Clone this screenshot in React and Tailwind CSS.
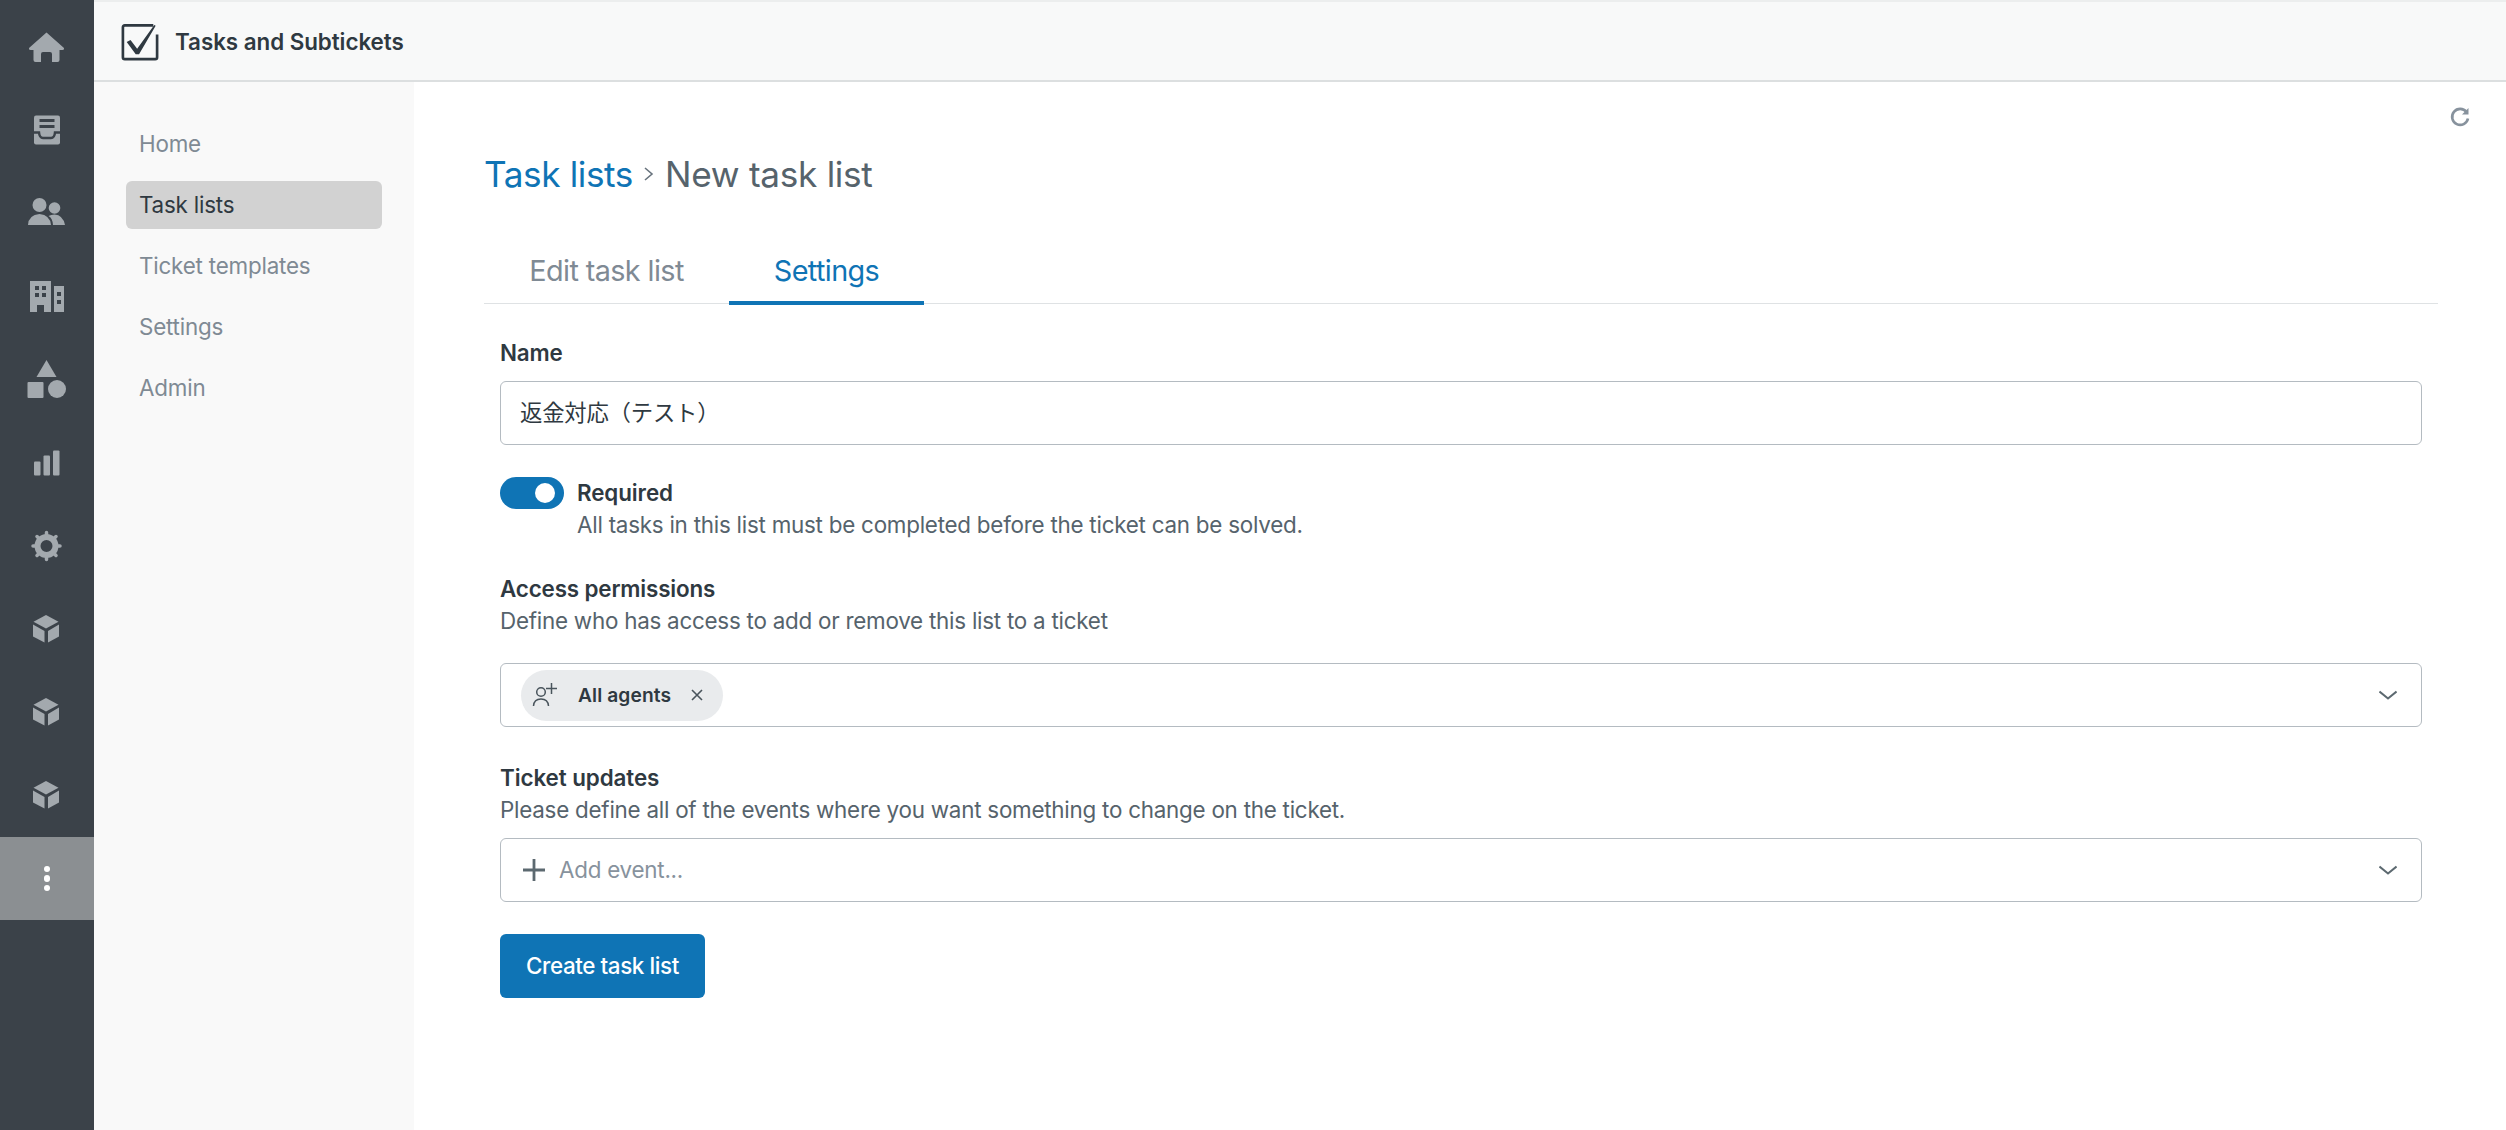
import { useState } from 'react';

const FONT = { fontFamily: 'Inter, "Noto Sans CJK JP", sans-serif' };

// sidebar icons, drawn on a 40x40 box
const HomeIcon = () => (
  <svg width="40" height="40" viewBox="0 0 40 40" fill="#a3a9ae">
    <path d="M19.5 5.5 L37 21 Q37.6 23 35.5 23 H32.5 V33 Q32.5 35 30.5 35 H25 V27 Q25 25 23 25 H16 Q14 25 14 27 V35 H8.5 Q6.5 35 6.5 33 V23 H3.5 Q1.4 23 2 21 Z" />
  </svg>
);

const InboxIcon = () => (
  <svg width="40" height="40" viewBox="0 0 40 40">
    <rect x="7" y="5.5" width="26" height="29" rx="2" fill="#a3a9ae" />
    <path d="M12.500 10.500 H27.500 M12.500 16.500 H27.500" stroke="#3b4249" strokeWidth="3" />
    <path d="M6 22.500 H12 Q12.500 28 16 28 H24 Q27.500 28 28 22.500 H34" stroke="#3b4249" strokeWidth="2.500" fill="none" />
  </svg>
);

const UsersIcon = () => (
  <svg width="40" height="40" viewBox="0 0 40 40" fill="#a3a9ae">
    <circle cx="12.500" cy="12" r="7" />
    <circle cx="27.500" cy="15" r="5.800" />
    <path d="M1 32 Q1.500 22 12.500 21 Q23 22 24 32 Z" />
    <path d="M26 32 Q25.500 25 21.500 23 Q24 21.500 27.500 21.500 Q36 22 38 32 Z" />
  </svg>
);

const BuildingIcon = () => (
  <svg width="40" height="40" viewBox="0 0 40 40">
    <path d="M3 5 H24 V36 H17 V29 H10 V36 H3 Z" fill="#a3a9ae" />
    <path d="M27 10 H37 V36 H27 Z" fill="#a3a9ae" />
    <g fill="#3b4249">
      <rect x="8" y="10" width="4" height="4" />
      <rect x="15" y="10" width="4" height="4" />
      <rect x="8" y="17" width="4" height="4" />
      <rect x="15" y="17" width="4" height="4" />
      <rect x="30" y="16" width="4" height="4" />
      <rect x="30" y="24" width="4" height="4" />
    </g>
  </svg>
);

const ShapesIcon = () => (
  <svg width="40" height="40" viewBox="0 0 40 40" fill="#a3a9ae">
    <path d="M19.500 1 L29.500 18 H9.500 Z" />
    <rect x="0.500" y="23" width="16" height="16" rx="1" />
    <circle cx="30" cy="30" r="9" />
  </svg>
);

const BarsIcon = () => (
  <svg width="40" height="40" viewBox="0 0 40 40" fill="#a3a9ae">
    <rect x="7" y="18.500" width="6.500" height="14" rx="1" />
    <rect x="16.500" y="12.500" width="6.500" height="20" rx="1" />
    <rect x="26" y="7.500" width="6.500" height="25" rx="1" />
  </svg>
);

const GearIcon = () => (
  <svg width="40" height="40" viewBox="0 0 40 40" stroke="#a3a9ae" fill="none">
    <circle cx="19.500" cy="20" r="9" strokeWidth="6" />
    <g strokeWidth="3.500" strokeLinecap="round">
      <path d="M19.500 6.500 V8 M19.500 32 V33.500 M6 20 H7.500 M31.500 20 H33" />
      <path d="M10 10.500 L11 11.500 M28 28.500 L29 29.500 M29 10.500 L28 11.500 M11 28.500 L10 29.500" />
    </g>
  </svg>
);

const BoxIcon = () => (
  <svg width="40" height="40" viewBox="0 0 40 40" fill="#a3a9ae">
    <path d="M19 6 L31.500 12.700 L19 19.500 L6.500 12.700 Z" />
    <path d="M6 15.500 L17.500 22 V33.500 L6 27.500 Z" />
    <path d="M21 22 L32 15.500 V27.500 L21 33.500 Z" />
  </svg>
);

const navIcons = [HomeIcon, InboxIcon, UsersIcon, BuildingIcon, ShapesIcon, BarsIcon, GearIcon, BoxIcon, BoxIcon, BoxIcon];

const Chevron = () => (
  <svg width="18" height="11" viewBox="0 0 18 11" fill="none" stroke="#5c6970" strokeWidth="2" className="shrink-0">
    <path d="M0.500 1.500 L9 8.500 L17.500 1.500" />
  </svg>
);

const Sidebar = () => (
  <aside className="w-[94px] shrink-0 bg-[#3b4249] pt-[5px] flex flex-col">
    {navIcons.map((Icon, i) => (
      <div key={i} className="h-[83.200px] flex items-center justify-center">
        <Icon />
      </div>
    ))}
    <div className="h-[83.200px] bg-[#8b8f92] flex flex-col items-center justify-center gap-[3px]">
      <span className="w-[6.500px] h-[6.500px] rounded-full bg-white" />
      <span className="w-[6.500px] h-[6.500px] rounded-full bg-white" />
      <span className="w-[6.500px] h-[6.500px] rounded-full bg-white" />
    </div>
  </aside>
);

const subNav = ['Home', 'Task lists', 'Ticket templates', 'Settings', 'Admin'];

const SubNav = () => (
  <nav className="w-[320px] shrink-0 bg-[#f9f9f9] pt-[38px] pl-[32px] flex flex-col gap-[13px]">
    {subNav.map((label) => (
      <a
        key={label}
        className={`w-[256px] h-[48px] px-[13px] flex items-center rounded-[6px] text-[22.400px] tracking-[-0.2px] ${label === 'Task lists' ? 'bg-[#d2d2d2] text-[#2f3941]' : 'text-[#7f8a94]'}`}
      >
        {label}
      </a>
    ))}
  </nav>
);

export default function App() {
  const [required, setRequired] = useState(true);

  return (
    <div className="h-screen w-full flex overflow-hidden bg-white" style={FONT}>
      <Sidebar />
      <div className="flex-1 min-w-0 flex flex-col">
        {/* Header */}
        <header className="h-[82px] shrink-0 bg-[#f8f9f9] border-t-2 border-b-2 border-t-[#eceeee] border-b-[#dcdfe0] flex items-center pl-[27px] pt-[2px] gap-[16px]">
          <svg width="38" height="38" viewBox="0 0 40 40" fill="none">
            <path d="M34 2.500 H4 Q2 2.500 2 4.500 V36 Q2 38 4 38 H36 Q38 38 38 36 V12" stroke="#2f3941" strokeWidth="2.800" />
            <path d="M6 20 L10 18 L17 27 L35 2 L36.500 3 L19 33 L15.500 33 Z" fill="#2f3941" />
          </svg>
          <span className="text-[22.400px] font-semibold tracking-[-0.05px] text-[#2f3941]">Tasks and Subtickets</span>
        </header>

        <div className="flex-1 flex min-h-0">
          <SubNav />

          <main className="relative flex-1 min-w-0 pl-[70px] pr-[68px] pt-[68px]">
            <button className="absolute top-[24px] right-[35px] text-[#87929d]">
              <svg width="22" height="22" viewBox="0 0 22 22" fill="none" stroke="currentColor" strokeWidth="2.600">
                <path d="M17.500 6 A8 8 0 1 0 19 12.500" />
                <path d="M19.500 2 V8.500 H13 Z" fill="currentColor" stroke="none" />
              </svg>
            </button>

            {/* Breadcrumb */}
            <div className="h-[48px] flex items-center text-[35.200px] tracking-[-0.4px]">
              <a className="text-[#0f74b5]">Task lists</a>
              <svg width="12" height="16" viewBox="0 0 12 16" fill="none" stroke="#68737d" strokeWidth="1.600" className="mx-[10px]">
                <path d="M2 2 L9 8 L2 14" />
              </svg>
              <span className="text-[#56636c] tracking-[-0.3px]">New task list</span>
            </div>

            {/* Tabs */}
            <div className="mt-[42px] h-[64px] flex border-b-[1.500px] border-[#dfe2e4] text-[28.800px] tracking-[-0.6px]">
              <button className="w-[245px] pb-[2px] text-[#7f8a94]">Edit task list</button>
              <button className="w-[195px] text-[#0f74b5] border-b-[4px] border-[#0f74b5] -mb-[1.500px]">Settings</button>
            </div>

            {/* Form */}
            <form className="px-[16px] pt-[33px] text-[22.400px] leading-[32px] tracking-[-0.24px]">
              <label className="block font-semibold tracking-[-0.15px] text-[#2f3941]">Name</label>
              <div className="mt-[12px] h-[64px] rounded-[6px] border-[1.500px] border-[#b4bbc1] flex items-center px-[19px] text-[#2f3941]">
                返金対応（テスト）
              </div>

              <div className="mt-[32px] flex gap-[13px]">
                <button
                  type="button"
                  onClick={() => setRequired(!required)}
                  className={`w-[64px] h-[32px] rounded-full flex items-center px-[9px] ${required ? 'bg-[#0f74b5] justify-end' : 'bg-[#87929d] justify-start'}`}
                >
                  <span className="w-[20px] h-[20px] rounded-full bg-white" />
                </button>
                <div>
                  <div className="font-semibold tracking-[-0.1px] text-[#2f3941]">Required</div>
                  <div className="text-[#56636c]">All tasks in this list must be completed before the ticket can be solved.</div>
                </div>
              </div>

              <div className="mt-[32px] font-semibold tracking-[-0.15px] text-[#2f3941]">Access permissions</div>
              <div className="text-[#56636c]">Define who has access to add or remove this list to a ticket</div>
              <div className="mt-[26px] h-[64px] rounded-[6px] border-[1.500px] border-[#b4bbc1] flex items-center justify-between pl-[20px] pr-[24px]">
                <div className="h-[51px] w-[202px] rounded-full bg-[#e9ebed] flex items-center pl-[11px]">
                  <svg width="28" height="26" viewBox="0 0 28 26" fill="none" stroke="#49545c" strokeWidth="1.500">
                    <circle cx="9" cy="10" r="4.300" />
                    <path d="M1.500 24 Q2 17 9 17 Q16 17 16.500 24" />
                    <path d="M19.500 1 V12 M14 6.500 H25" />
                  </svg>
                  <span className="ml-[18px] text-[19.200px] font-semibold tracking-[0.1px] text-[#2f3941]">All agents</span>
                  <svg width="14" height="14" viewBox="0 0 14 14" fill="none" stroke="#49545c" strokeWidth="1.600" className="ml-[19px]">
                    <path d="M2 2 L12 12 M12 2 L2 12" />
                  </svg>
                </div>
                <Chevron />
              </div>

              <div className="mt-[35px] font-semibold tracking-[-0.08px] text-[#2f3941]">Ticket updates</div>
              <div className="text-[#56636c]">Please define all of the events where you want something to change on the ticket.</div>
              <div className="mt-[12px] h-[64px] rounded-[6px] border-[1.500px] border-[#b4bbc1] flex items-center pl-[22px] pr-[24px]">
                <svg width="22" height="22" viewBox="0 0 22 22" fill="none" stroke="#5c6970" strokeWidth="2.800" className="shrink-0">
                  <path d="M11 0 V22 M0 11 H22" />
                </svg>
                <span className="ml-[14px] flex-1 text-[#87929d]">Add event...</span>
                <Chevron />
              </div>

              <button type="button" className="mt-[32px] h-[64px] w-[205px] rounded-[6px] bg-[#0f74b5] text-white font-medium tracking-[-0.4px]">
                Create task list
              </button>
            </form>
          </main>
        </div>
      </div>
    </div>
  );
}
